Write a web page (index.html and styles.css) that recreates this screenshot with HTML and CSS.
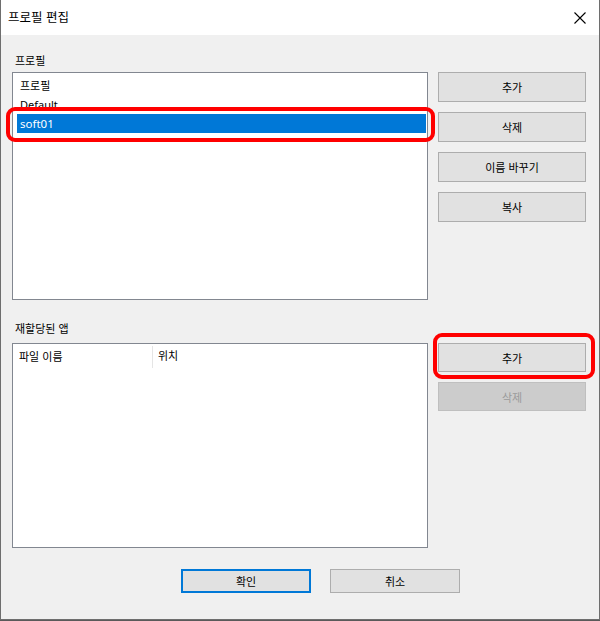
FILE: index.html
```html
<!DOCTYPE html>
<html lang="ko">
<head>
<meta charset="utf-8">
<title>프로필 편집</title>
<link rel="stylesheet" href="styles.css">
</head>
<body>
<div class="window">
  <div class="titlebar">
    <span class="title">프로필 편집</span>
    <svg class="close" width="12" height="12" viewBox="0 0 12 12"><path d="M0.5 0.5 L11.5 11.5 M11.5 0.5 L0.5 11.5" stroke="#000" stroke-width="1.1" fill="none"/></svg>
  </div>
  <div class="content">
    <div class="label label-top">프로필</div>
    <div class="row row-profiles">
      <div class="listbox">
        <div class="item">프로필</div>
        <div class="item">Default</div>
        <div class="item selected">soft01</div>
        <div class="mark mark-list"></div>
      </div>
      <div class="btns btns-profiles">
        <button class="btn">추가</button>
        <button class="btn">삭제</button>
        <button class="btn">이름 바꾸기</button>
        <button class="btn">복사</button>
      </div>
    </div>
    <div class="label label-apps">재할당된 앱</div>
    <div class="row row-apps">
      <div class="listview">
        <div class="header">
          <div class="col col-name">파일 이름</div>
          <div class="col col-loc">위치</div>
        </div>
      </div>
      <div class="btns btns-apps">
        <div class="btn-wrap">
          <button class="btn">추가</button>
          <div class="mark mark-btn"></div>
        </div>
        <button class="btn" disabled>삭제</button>
      </div>
    </div>
    <div class="footer">
      <button class="btn btn-foot primary">확인</button>
      <button class="btn btn-foot">취소</button>
    </div>
  </div>
</div>
</body>
</html>
```
FILE: styles.css
```css
* { box-sizing: border-box; }
html, body { margin: 0; padding: 0; }
body {
  background: #5a5a5a;
  width: 600px;
  height: 621px;
  overflow: hidden;
  font-family: "Noto Sans", "Noto Sans CJK KR", sans-serif;
  font-size: 11px;
  color: #000;
}
.window {
  width: 600px;
  height: 620px;
  background: #f0f0f0;
  border-left: 1px solid #6e6e6e;
  border-right: 1px solid #6e6e6e;
  border-bottom: 1px solid #6e6e6e;
}
.titlebar {
  height: 35px;
  background: #fff;
  display: flex;
  align-items: center;
  justify-content: space-between;
  padding: 0 13px 0 7px;
}
.title {
  font-family: "Noto Sans CJK KR", sans-serif;
  font-size: 12.5px;
  line-height: 16px;
  margin-top: -1px;
}
.close { display: block; margin-top: 1px; }
.content {
  padding: 17px 0 0 11px;
}
.label {
  height: 16px;
  line-height: 16px;
  font-family: "Noto Sans CJK KR", sans-serif;
  font-size: 11px;
  padding-left: 3px;
}
.label-top { margin-bottom: 4px; }
.label-apps { margin-top: 20px; margin-bottom: 7px; }
.row {
  display: grid;
  grid-template-columns: 416px 148px;
  column-gap: 10px;
}
.row-profiles { height: 228px; }
.row-apps { height: 205px; }
.listbox, .listview {
  position: relative;
  background: #fff;
  border: 1px solid #828790;
}
.listbox { padding: 3px 1px 0 4px; }
.item {
  height: 19px;
  line-height: 19px;
  padding-left: 3px;
  font-size: 11px;
}
.item.selected {
  background: #0078d7;
  color: #fff;
  font-size: 11.5px;
}
.mark {
  position: absolute;
  border: 4px solid #ff0000;
  border-radius: 9px;
  pointer-events: none;
}
.mark-list {
  left: -7px;
  top: 34px;
  width: 429px;
  height: 35px;
}
.btns {
  display: flex;
  flex-direction: column;
}
.btns-profiles { gap: 10px; }
.btns-profiles .btn { height: 30px; }
.btns-apps { gap: 10px; }
.btns-apps .btn { height: 29px; width: 148px; }
.btn-wrap { position: relative; height: 29px; }
.mark-btn {
  left: -5px;
  top: -10px;
  width: 162px;
  height: 46px;
}
.btn {
  display: block;
  margin: 0;
  padding: 0;
  background: #e1e1e1;
  border: 1px solid #adadad;
  font-family: "Noto Sans CJK KR", sans-serif;
  font-size: 11px;
  color: #000;
  text-align: center;
}
.btn:disabled {
  background: #cccccc;
  border-color: #bfbfbf;
  color: #9a9a9a;
}
.header {
  display: flex;
  height: 24px;
}
.col {
  font-family: "Noto Sans CJK KR", sans-serif;
  font-size: 11px;
  line-height: 22px;
}
.col-name {
  width: 140px;
  padding-left: 6px;
  margin-top: 2px;
  border-right: 1px solid #e5e5e5;
  line-height: 20px;
}
.col-loc { padding-left: 5px; }
.footer {
  display: flex;
  gap: 19px;
  margin-top: 21px;
  margin-left: 169px;
}
.btn-foot {
  width: 130px;
  height: 24px;
}
.btn-foot.primary {
  border: 2px solid #0078d7;
}
```
